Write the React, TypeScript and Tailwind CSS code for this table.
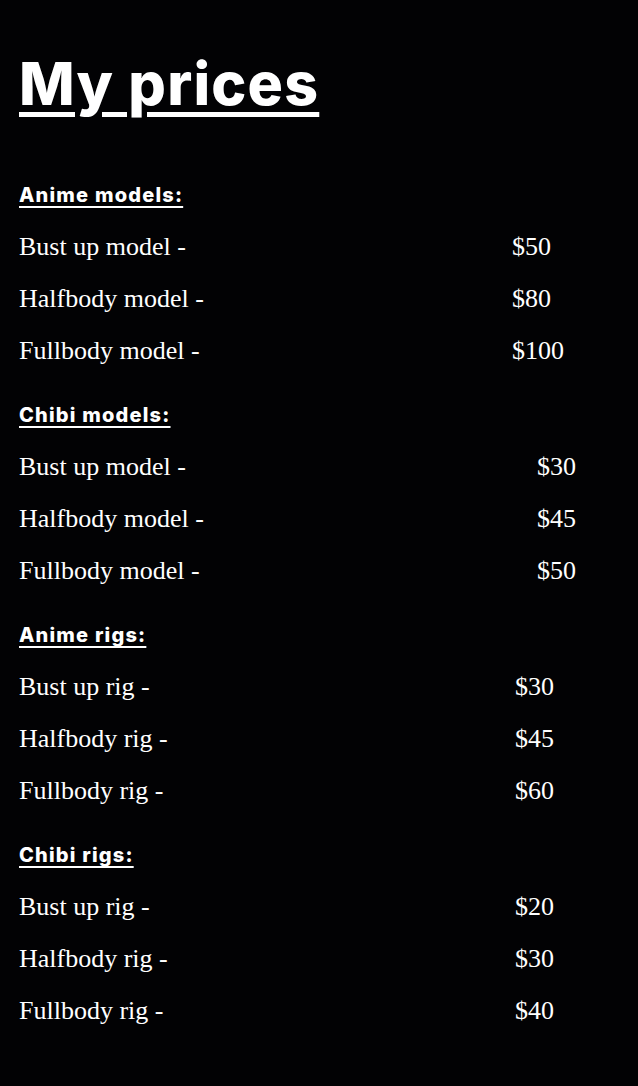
import React from "react";

type Item = { name: string; price: string };
type Section = { title: string; labelW: string; items: Item[] };

const sections: Section[] = [
  {
    title: "Anime models:",
    labelW: "w-[493px]",
    items: [
      { name: "Bust up model -", price: "$50" },
      { name: "Halfbody model -", price: "$80" },
      { name: "Fullbody model -", price: "$100" },
    ],
  },
  {
    title: "Chibi models:",
    labelW: "w-[518px]",
    items: [
      { name: "Bust up model -", price: "$30" },
      { name: "Halfbody model -", price: "$45" },
      { name: "Fullbody model -", price: "$50" },
    ],
  },
  {
    title: "Anime rigs:",
    labelW: "w-[496px]",
    items: [
      { name: "Bust up rig -", price: "$30" },
      { name: "Halfbody rig -", price: "$45" },
      { name: "Fullbody rig -", price: "$60" },
    ],
  },
  {
    title: "Chibi rigs:",
    labelW: "w-[496px]",
    items: [
      { name: "Bust up rig -", price: "$20" },
      { name: "Halfbody rig -", price: "$30" },
      { name: "Fullbody rig -", price: "$40" },
    ],
  },
];

export default function App() {
  return (
    <div className="min-h-screen bg-[#020204] text-white px-[19px] pt-[51px]">
      <h1 className="font-['Inter',sans-serif] font-extrabold text-[59px] leading-[66px] tracking-[1.2px] underline underline-offset-[7px] decoration-[5px]">
        My prices
      </h1>

      <div className="mt-[52px] flex flex-col gap-3">
        {sections.map((s) => (
          <section key={s.title}>
            <h2 className="font-['Inter',sans-serif] font-extrabold text-[20px] leading-[52px] tracking-[1.2px] underline underline-offset-[4px] decoration-2">
              {s.title}
            </h2>
            {s.items.map((it) => (
              <div
                key={it.name}
                className="flex font-['Liberation_Serif',serif] text-[26px] leading-[52px]"
              >
                <span className={s.labelW}>{it.name}</span>
                <span>{it.price}</span>
              </div>
            ))}
          </section>
        ))}
      </div>
    </div>
  );
}
